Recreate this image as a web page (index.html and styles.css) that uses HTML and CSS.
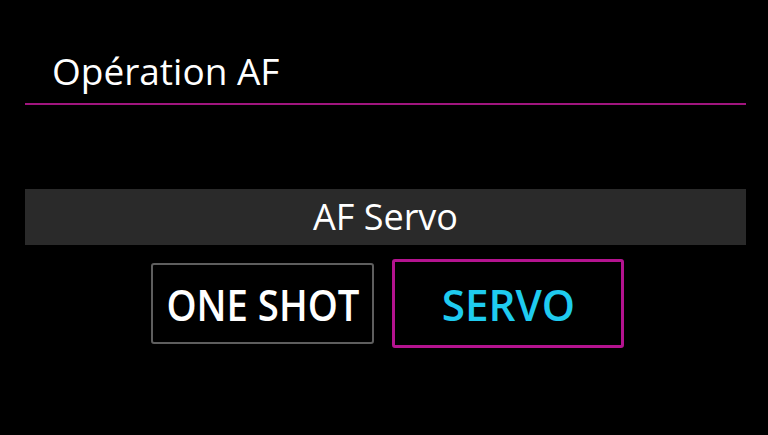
FILE: index.html
```html
<!DOCTYPE html>
<html>
<head>
  <meta charset="utf-8">
  <title>Opération AF</title>
  <link rel="stylesheet" href="styles.css">
</head>
<body>
  <div class="screen">
    <header class="menu-title">
      <h1>Opération AF</h1>
    </header>
    <section class="setting">
      <div class="current-value">AF Servo</div>
      <div class="options">
        <div class="option"><span>ONE SHOT</span></div>
        <div class="option selected"><span>SERVO</span></div>
      </div>
    </section>
  </div>
</body>
</html>
```

FILE: styles.css
```css
/* camera menu screen */
body {
  margin: 0;
  background-color: #000;
  font-family: "Open Sans", sans-serif;
  color: #fff;
}
.screen {
  width: 768px;
  height: 435px;
  padding: 0 22px 0 25px;
  box-sizing: border-box;
}
.menu-title {
  padding: 51px 0 0 27px;
  height: 52px;
  border-bottom: 2px solid #a0157e;
}
.menu-title h1 {
  margin: 0;
  font-size: 37px;
  font-weight: normal;
  line-height: 40px;
}
.setting {
  padding-top: 84px;
}
.current-value {
  height: 56px;
  background-color: #2a2a2a;
  font-size: 36px;
  line-height: 56px;
  text-align: center;
}
.options {
  display: flex;
  justify-content: center;
  align-items: center;
  gap: 18px;
  margin-top: 14px;
  padding-left: 4px;
}
.option {
  display: flex;
  justify-content: center;
  align-items: center;
  width: 219px;
  height: 77px;
  border: 2px solid #5e5e5e;
  border-radius: 3px;
  font-weight: 600;
  font-size: 44px;
  white-space: nowrap;
}
.option span {
  display: inline-block;
  transform: scaleX(0.87);
}
.option.selected {
  width: 226px;
  height: 83px;
  border: 3px solid #b4138f;
  color: #1fcbef;
}
.option.selected span {
  transform: scaleX(0.96);
}
```
